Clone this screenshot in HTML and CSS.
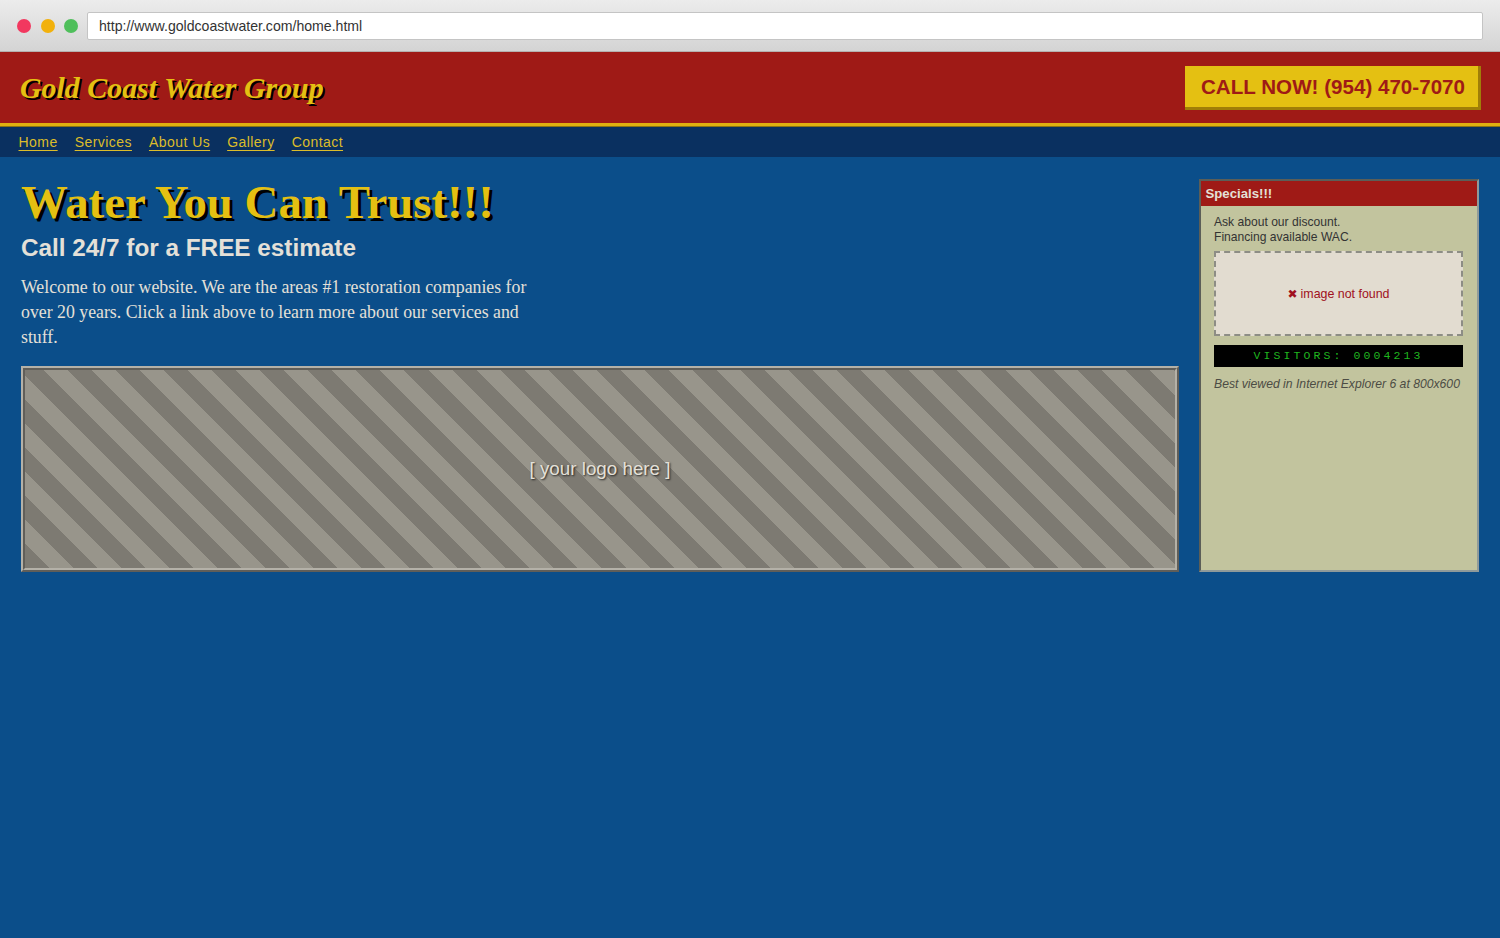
FILE: index.html
```html
<!DOCTYPE html>
<html lang="en">
<head>
<meta charset="utf-8">
<title>Gold Coast Water Group</title>
<link rel="stylesheet" href="styles.css">
</head>
<body>
<div class="chrome">
  <div class="dots"><span class="dot red"></span><span class="dot amber"></span><span class="dot green"></span></div>
  <div class="url">http://www.goldcoastwater.com/home.html</div>
</div>
<header class="masthead">
  <div class="brand">Gold Coast Water Group</div>
  <div class="call">CALL NOW! (954) 470-7070</div>
</header>
<nav class="nav">
  <a href="#">Home</a><a href="#">Services</a><a href="#">About Us</a><a href="#">Gallery</a><a href="#">Contact</a>
</nav>
<main class="content">
  <section class="primary">
    <h1>Water You Can Trust!!!</h1>
    <h2>Call 24/7 for a FREE estimate</h2>
    <p class="intro">Welcome to our website. We are the areas #1 restoration companies for over 20 years. Click a link above to learn more about our services and stuff.</p>
    <div class="logo"><span>[ your logo here ]</span></div>
  </section>
  <aside class="side">
    <div class="side-head">Specials!!!</div>
    <div class="side-body">
      <p class="side-text">Ask about our discount.<br>Financing available WAC.</p>
      <div class="broken"><span class="cross">&#10006;</span> image not found</div>
      <div class="counter">VISITORS: 0004213</div>
      <p class="best">Best viewed in Internet Explorer 6 at 800x600</p>
    </div>
  </aside>
</main>
</body>
</html>
```
FILE: styles.css
```css
* { box-sizing: border-box; }
html, body { margin: 0; padding: 0; }
body {
  height: 938px;
  overflow: hidden;
  background: #0b4e8a;
  font-family: "Liberation Sans", Arial, sans-serif;
}
.chrome {
  height: 52px;
  display: flex;
  align-items: center;
  padding: 0 17px;
  background: linear-gradient(#ececec, #d4d4d4);
  border-bottom: 1px solid #b5b0ae;
}
.dots { display: flex; gap: 9.5px; margin-right: 9px; }
.dot { width: 14px; height: 14px; border-radius: 50%; }
.red { background: #f2385f; }
.amber { background: #f2b10c; }
.green { background: #4fbf5b; }
.url {
  flex: 1;
  height: 28px;
  line-height: 27px;
  padding-left: 11px;
  background: #fff;
  border: 1px solid #c4c4c4;
  border-radius: 2px;
  font-size: 14.1px;
  color: #333;
}
.masthead {
  height: 74px;
  display: flex;
  align-items: center;
  justify-content: space-between;
  padding: 0 19px 0 20px;
  background: #9f1a16;
  border-bottom: 3px solid #e0b00f;
}
.brand {
  font-family: "Liberation Serif", "Times New Roman", serif;
  font-weight: bold;
  font-style: italic;
  font-size: 29.9px;
  color: #e4c012;
  text-shadow: 2px 2px 0 #000;
}
.call {
  width: 296px;
  height: 44px;
  line-height: 42px;
  padding-left: 3px;
  text-align: center;
  background: #e4c012;
  color: #9f1a16;
  font-size: 20.6px;
  font-weight: bold;
  border-right: 3px solid #a07e08;
  border-bottom: 3px solid #a07e08;
}
.nav {
  height: 31px;
  display: flex;
  align-items: center;
  gap: 17px;
  padding: 0 18.5px;
  background: #0a3060;
  border-top: 1px solid #8a7414;
}
.nav a {
  color: #dcbc2a;
  font-size: 14px;
  letter-spacing: 0.45px;
  text-decoration: underline;
  text-underline-offset: 3px;
}
.content {
  display: flex;
  gap: 20px;
  padding: 22px 21px 0;
}
.primary { flex: 1; min-width: 0; }
h1 {
  margin: 0;
  font-family: "Liberation Serif", "Times New Roman", serif;
  font-weight: bold;
  font-size: 46.8px;
  line-height: 47px;
  color: #e4c012;
  text-shadow: 3px 3px 0 #000;
}
h2 {
  margin: 7px 0 0;
  font-size: 24.3px;
  line-height: 30px;
  font-weight: bold;
  color: #e4e0d8;
}
.intro {
  margin: 12px 0 0;
  width: 520px;
  font-family: "Liberation Serif", "Times New Roman", serif;
  font-size: 17.8px;
  line-height: 25px;
  color: #e4e0d8;
}
.logo {
  height: 206px;
  margin-top: 16px;
  display: flex;
  align-items: center;
  justify-content: center;
  border: 4px ridge #b4b1a8;
  background: repeating-linear-gradient(45deg, #7d7a72 0, #7d7a72 17px, #98958b 17px, #98958b 34px);
}
.logo span {
  font-size: 18.8px;
  color: #e4e0d8;
  text-shadow: 1px 1px 2px #222;
}
.side {
  width: 280px;
  flex: none;
  display: flex;
  flex-direction: column;
  border: 2px solid;
  border-color: #5b5e58 #8f9a9a #8f9a9a #5b5e58;
  background: #c2c49e;
}
.side-head {
  height: 25px;
  line-height: 25px;
  padding-left: 4.5px;
  background: #9f1a16;
  color: #e4e0d8;
  font-size: 13.2px;
  font-weight: bold;
}
.side-body { padding: 9px 14px 0 13px; }
.side-text {
  margin: 0;
  font-size: 12.1px;
  line-height: 14.5px;
  color: #333;
}
.broken {
  height: 85px;
  margin-top: 7px;
  display: flex;
  align-items: center;
  justify-content: center;
  gap: 3px;
  background: #e2dcd0;
  border: 2px dashed #8d8d85;
  color: #a01020;
  font-size: 12.4px;
}
.cross { font-size: 12px; font-family: "DejaVu Sans", sans-serif; }
.counter {
  height: 22px;
  line-height: 22px;
  margin-top: 9px;
  text-align: center;
  background: #000;
  color: #1fb51f;
  font-family: "Liberation Mono", "Courier New", monospace;
  font-size: 11.5px;
  letter-spacing: 3.1px;
}
.best {
  margin: 9.5px 0 0;
  font-size: 12.2px;
  line-height: 15px;
  font-style: italic;
  white-space: nowrap;
  color: #4c4c44;
}
```
